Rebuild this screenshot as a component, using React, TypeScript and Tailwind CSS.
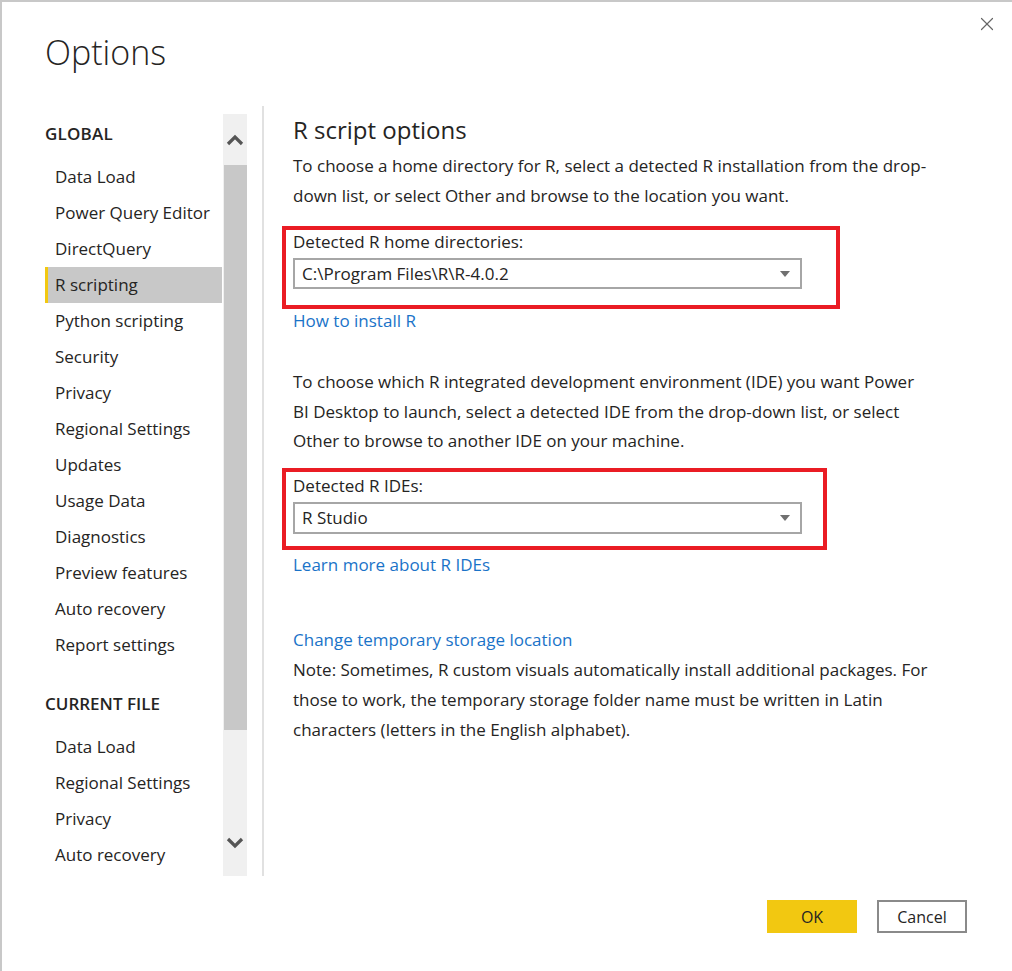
import { X } from "lucide-react";

const globalItems = [
  "Data Load",
  "Power Query Editor",
  "DirectQuery",
  "R scripting",
  "Python scripting",
  "Security",
  "Privacy",
  "Regional Settings",
  "Updates",
  "Usage Data",
  "Diagnostics",
  "Preview features",
  "Auto recovery",
  "Report settings",
];

const fileItems = ["Data Load", "Regional Settings", "Privacy", "Auto recovery"];

const font = { fontFamily: '"Open Sans", "Noto Sans", sans-serif' };

function NavItem({ label, active }: { label: string; active?: boolean }) {
  return (
    <div
      className={
        active
          ? "h-9 flex items-center pl-[7px] border-l-[3px] border-[#f2c811] bg-[#c8c8c8] whitespace-nowrap"
          : "h-9 flex items-center pl-[10px] whitespace-nowrap"
      }
    >
      {label}
    </div>
  );
}

function Chevron({ up }: { up?: boolean }) {
  return (
    <svg width="18" height="12" viewBox="0 0 18 12" className="block">
      <path
        d={up ? "M2 10 L9 3 L16 10" : "M2 2 L9 9 L16 2"}
        fill="none"
        stroke="#555555"
        strokeWidth="3.2"
      />
    </svg>
  );
}

function Select({ value, height }: { value: string; height: string }) {
  return (
    <div
      className={`w-[509px] ${height} border-2 border-[#a6a6a6] flex items-center justify-between pl-[7px] pr-[10px] bg-white`}
    >
      <span>{value}</span>
      <svg width="10" height="6" viewBox="0 0 10 6">
        <path d="M0 0 L10 0 L5 6 Z" fill="#707070" />
      </svg>
    </div>
  );
}

export default function App() {
  return (
    <div
      style={font}
      className="w-[1012px] h-[971px] bg-white border-l-2 border-t-2 border-[#c8c8c8] relative text-[17px] text-[#252423] overflow-hidden"
    >
      {/* close */}
      <button className="absolute top-[11px] right-[14px] text-[#666]">
        <X size={22} strokeWidth={1.3} />
      </button>

      <h1 className="pl-[43px] pt-[26px] h-[104px] text-[34px] font-light leading-[48px] text-[#252423]">
        Options
      </h1>

      <div className="flex">
        {/* sidebar */}
        <div className="flex pl-[43px] pt-2">
          <div className="w-[177px] leading-6">
            <div className="h-9 mt-[2px] flex items-center font-semibold tracking-[0.2px]">GLOBAL</div>
            <div className="mt-[7px]">
              {globalItems.map((item) => (
                <NavItem key={item} label={item} active={item === "R scripting"} />
              ))}
            </div>
            <div className="h-9 mt-[23px] flex items-center font-semibold">CURRENT FILE</div>
            <div className="mt-[7px]">
              {fileItems.map((item) => (
                <NavItem key={item + "f"} label={item} />
              ))}
            </div>
          </div>
          <div className="w-6 h-[762px] ml-[1px] bg-[#f0f0f0] flex flex-col items-center">
            <div className="h-[51px] flex items-center justify-center">
              <Chevron up />
            </div>
            <div className="w-[23px] h-[565px] bg-[#c8c8c8]"></div>
            <div className="flex-1"></div>
            <div className="h-[66px] flex items-center justify-center">
              <Chevron />
            </div>
          </div>
        </div>

        <div className="w-[2px] h-[770px] bg-[#e1e1e1] ml-[15px]"></div>

        {/* content */}
        <div className="pl-[29px] pt-2 flex-1">
          <h2 className="text-[24px] leading-8">R script options</h2>
          <p className="mt-[5px] leading-[30px] whitespace-nowrap">
            To choose a home directory for R, select a detected R installation from the drop-
            <br />
            down list, or select Other and browse to the location you want.
          </p>

          <div className="w-[558px] -ml-[11px] mt-[15px] border-4 border-[#ea1c24] pl-[7px] pb-4">
            <div className="leading-6">Detected R home directories:</div>
            <div className="mt-1">
              <Select value="C:\Program Files\R\R-4.0.2" height="h-[31px]" />
            </div>
          </div>
          <a className="block leading-6 text-[#1a73c8]">How to install R</a>

          <p className="mt-[34px] leading-[29.5px] whitespace-nowrap">
            To choose which R integrated development environment (IDE) you want Power
            <br />
            BI Desktop to launch, select a detected IDE from the drop-down list, or select
            <br />
            Other to browse to another IDE on your machine.
          </p>

          <div className="w-[545px] -ml-[11px] mt-[12px] border-4 border-[#ea1c24] pl-[7px] pt-[2px] pb-3">
            <div className="leading-6">Detected R IDEs:</div>
            <div className="mt-1">
              <Select value="R Studio" height="h-8" />
            </div>
          </div>
          <a className="block mt-[3px] leading-6 text-[#1a73c8]">Learn more about R IDEs</a>

          <div className="mt-[48px] leading-[30px] whitespace-nowrap">
            <a className="block text-[#1a73c8]">Change temporary storage location</a>
            <p>
              Note: Sometimes, R custom visuals automatically install additional packages. For
              <br />
              those to work, the temporary storage folder name must be written in Latin
              <br />
              characters (letters in the English alphabet).
            </p>
          </div>
        </div>
      </div>

      {/* footer buttons */}
      <div className="absolute left-0 right-0 top-[898px] flex justify-end gap-5 pr-[45px]">
        <button className="w-[90px] h-[33px] bg-[#f2c811] text-[16px] text-[#252423]">OK</button>
        <button className="w-[90px] h-[33px] border-2 border-[#8a8a8a] bg-white text-[16px] text-[#252423]">
          Cancel
        </button>
      </div>
    </div>
  );
}
